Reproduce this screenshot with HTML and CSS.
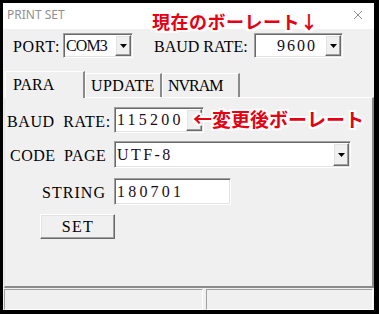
FILE: index.html
```html
<!DOCTYPE html>
<html lang="ja">
  <head>
    <meta charset="UTF-8" />
    <title>PRINT SET</title>
    <link rel="stylesheet" href="styles.css">
  </head>
  <body>
    <div class="window">
      <!-- Title bar -->
      <div class="titlebar">
        <span class="title">PRINT SET</span>
        <svg class="close" width="10" height="10" viewBox="0 0 10 10">
          <path d="M1 1 L9 9 M9 1 L1 9" stroke="#8f8f8f" stroke-width="1" fill="none" />
        </svg>
      </div>

      <!-- Port / current baud rate -->
      <div class="top-row">
        <span class="lbl lbl-port">PORT:</span>
        <div class="combo combo-port">
          <span class="value">COM3</span>
          <span class="drop"><svg width="7" height="4" viewBox="0 0 7 4"><polygon points="0,0 7,0 3.5,4" fill="#000" /></svg></span>
        </div>
        <span class="lbl lbl-baud">BAUD RATE:</span>
        <div class="combo combo-baud">
          <span class="value">9600</span>
          <span class="drop"><svg width="7" height="4" viewBox="0 0 7 4"><polygon points="0,0 7,0 3.5,4" fill="#000" /></svg></span>
        </div>
      </div>

      <!-- Tabs -->
      <div class="tabs">
        <div class="tab tab-para active">PARA</div>
        <div class="tab tab-update">UPDATE</div>
        <div class="tab tab-nvram">NVRAM</div>
      </div>

      <div class="panel">
        <div class="row row-baud">
          <span class="field-lbl lbl-newbaud">BAUD RATE:</span>
          <div class="combo combo-newbaud">
            <span class="value">115200</span>
            <span class="drop"></span>
          </div>
        </div>
        <div class="row row-code">
          <span class="field-lbl lbl-code">CODE PAGE</span>
          <div class="combo combo-code">
            <span class="value">UTF-8</span>
            <span class="drop"><svg width="7" height="4" viewBox="0 0 7 4"><polygon points="0,0 7,0 3.5,4" fill="#000" /></svg></span>
          </div>
        </div>
        <div class="row row-string">
          <span class="field-lbl lbl-string">STRING</span>
          <div class="textbox"><span class="value">180701</span></div>
        </div>
        <div class="row row-set">
          <button class="set-btn">SET</button>
        </div>
      </div>

      <!-- Status bar -->
      <div class="statusbar">
        <div class="pane pane-left"></div>
        <div class="pane pane-right"></div>
      </div>

      <!-- Red annotations -->
      <div class="note note-current">現在のボーレート↓</div>
      <div class="note note-new">←変更後ボーレート</div>
    </div>
  </body>
</html>
```

FILE: styles.css
```css
/* Dialog styling */
* {
  margin: 0;
  padding: 0;
  box-sizing: border-box;
}

body {
  background: #000;
  width: 379px;
  height: 314px;
  overflow: hidden;
}

.window {
  position: relative;
  width: 371px;
  height: 307px;
  margin: 3px 0 0 3px;
  background: #f0f0f0;
  display: flex;
  flex-direction: column;
  font-family: "Liberation Serif", "Times New Roman", serif;
  font-size: 16px;
  line-height: 20px;
  color: #000;
}

/* Title bar */
.titlebar {
  height: 26px;
  flex: none;
  background: #fff;
  display: flex;
  align-items: center;
  justify-content: space-between;
  padding: 0 11px 2px 4px;
}

.title {
  font-family: "Noto Sans", sans-serif;
  font-size: 12px;
  color: #8f8f8f;
}

.close {
  display: block;
}

/* Top row */
.top-row {
  display: flex;
  align-items: center;
  height: 25px;
  margin-top: 4px;
  padding-left: 9px;
  flex: none;
}

.lbl {
  flex: none;
  white-space: nowrap;
  padding-top: 3px;
}

.lbl-port {
  width: 51px;
  padding-left: 1px;
  letter-spacing: 0.7px;
}

.lbl-baud {
  width: 100px;
  margin-left: 21px;
}

/* Combo boxes and text boxes */
.combo,
.textbox {
  flex: none;
  display: flex;
  align-items: center;
  background: #fff;
  border: 1px solid;
  border-color: #a0a0a0 #fff #fff #a0a0a0;
  box-shadow: inset 1px 1px #696969, inset -1px -1px #e3e3e3;
  padding: 1px;
}

.combo .value,
.textbox .value {
  flex: 1;
  padding-left: 1px;
  color: #1e0a18;
  white-space: nowrap;
}

.combo .drop {
  flex: none;
  width: 16px;
  align-self: stretch;
  display: flex;
  align-items: center;
  justify-content: center;
  background: #f0f0f0;
  border: 1px solid;
  border-color: #fff #696969 #696969 #fff;
  box-shadow: inset -1px -1px #a0a0a0, inset 1px 1px #e3e3e3;
}

.combo-port {
  width: 70px;
  height: 25px;
}

.combo-port .value {
  color: #0a0a24;
  letter-spacing: -0.9px;
}

.combo-baud {
  width: 89px;
  height: 25px;
}

.combo-baud .value {
  padding-left: 21px;
  color: #0a0a24;
  letter-spacing: 2px;
}

/* Tabs */
.tabs {
  display: flex;
  align-items: flex-end;
  margin-top: 13px;
  padding-left: 2px;
  flex: none;
}

.tab {
  height: 24px;
  padding: 2px 0 0 5px;
  border-top: 1px solid #fff;
  border-left: 1px solid #fff;
  border-right: 2px solid #8a8a8a;
  white-space: nowrap;
}

.tab-update {
  width: 77px;
  letter-spacing: 0.4px;
}

.tab-nvram {
  width: 78px;
  letter-spacing: -1px;
}

.tab.active {
  position: relative;
  z-index: 1;
  width: 80px;
  height: 27px;
  padding: 3px 0 0 7px;
  margin-bottom: -1px;
  background: #f0f0f0;
}

/* Panel */
.panel {
  flex: none;
  width: 370px;
  height: 191px;
  margin-left: 1px;
  border-top: 1px solid #fff;
  border-left: 1px solid #e3e3e3;
  border-right: 2px solid #8a8a8a;
  border-bottom: 2px solid #8a8a8a;
  display: flex;
  flex-direction: column;
}

.row {
  display: flex;
  align-items: center;
}

.field-lbl {
  flex: none;
  width: 109px;
  white-space: nowrap;
  padding-top: 3px;
}

.row-baud {
  margin-top: 9px;
}

.lbl-newbaud {
  padding-left: 2px;
  letter-spacing: 0.6px;
  word-spacing: 4px;
}

.combo-newbaud {
  width: 90px;
  height: 26px;
}

.combo-newbaud .value,
.textbox .value {
  letter-spacing: 3.2px;
}

.row-code {
  margin-top: 8px;
}

.lbl-code {
  padding-left: 5px;
  letter-spacing: 0.5px;
  word-spacing: 4px;
}

.combo-code {
  width: 237px;
  height: 27px;
}

.combo-code .value {
  letter-spacing: 2.4px;
}

.row-string {
  margin-top: 10px;
}

.lbl-string {
  padding-left: 37px;
  letter-spacing: 1.05px;
}

.textbox {
  width: 117px;
  height: 27px;
}

.row-set {
  margin-top: 9px;
  padding-left: 35px;
}

.set-btn {
  width: 75px;
  height: 25px;
  font-family: inherit;
  font-size: 16px;
  letter-spacing: 1.3px;
  color: #000;
  background: #f0f0f0;
  border: 1px solid;
  border-color: #fff #696969 #696969 #fff;
  box-shadow: inset -1px -1px #a0a0a0, inset 1px 1px #e3e3e3;
  line-height: 20px;
  padding: 1px 0 0 1px;
}

/* Status bar */
.statusbar {
  flex: 1;
  display: flex;
  gap: 3px;
  padding: 1px 1px 0 1px;
}

.pane {
  border-top: 1px solid #a0a0a0;
  border-left: 1px solid #a0a0a0;
  border-bottom: 1px solid #fff;
  border-right: 1px solid #fff;
}

.pane-left {
  width: 199px;
}

.pane-right {
  flex: 1;
}

/* Annotations drawn over the dialog */
.note {
  position: absolute;
  font-family: "Noto Sans CJK JP", "Noto Sans", sans-serif;
  font-weight: bold;
  color: #e60012;
  line-height: 1;
  white-space: nowrap;
  text-shadow:
    -2px 0 #fff, 2px 0 #fff, 0 -2px #fff, 0 2px #fff,
    -2px -2px #fff, 2px -2px #fff, -2px 2px #fff, 2px 2px #fff,
    0 0 3px rgba(0, 0, 0, 0.25);
}

.note-current {
  left: 149px;
  top: 9px;
  font-size: 18px;
  letter-spacing: 0.5px;
}

.note-new {
  left: 190px;
  top: 106px;
  font-size: 19px;
}
```
